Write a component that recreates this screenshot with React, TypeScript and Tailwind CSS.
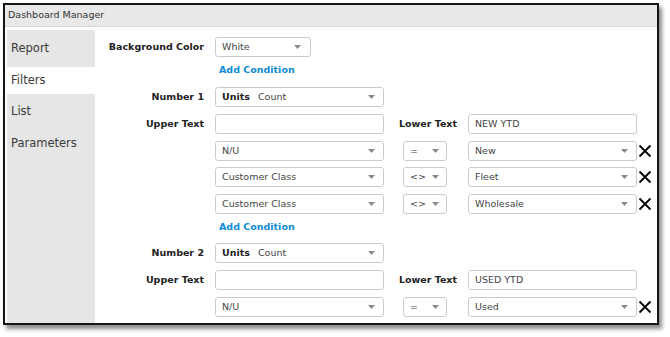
import type { ReactNode } from "react";

const FONT = "font-['DejaVu_Sans',Verdana,sans-serif]";

function Arrow() {
  return (
    <svg width="7" height="4" viewBox="0 0 7 4" className="shrink-0">
      <path d="M0 0h7L3.5 4z" fill="#8a8a8a" />
    </svg>
  );
}

function Select({ w, children, arrowPad = "pr-[8px]" }: { w: string; children: ReactNode; arrowPad?: string }) {
  return (
    <div className={`${w} flex h-[20px] shrink-0 items-center justify-between rounded-[3px] border border-[#cbcbcb] bg-white pl-[6px] ${arrowPad} text-[9.5px] text-[#444]`}>
      <span className="flex items-center gap-[8px]">{children}</span>
      <Arrow />
    </div>
  );
}

function Input({ value = "" }: { value?: string }) {
  return (
    <div className="flex h-[20px] w-[169px] shrink-0 items-center rounded-[3px] border border-[#cbcbcb] bg-white pl-[6px] text-[9.5px] text-[#444]">
      {value}
    </div>
  );
}

function Label({ children }: { children?: ReactNode }) {
  return <div className="w-[120px] shrink-0 pr-[11px] text-right text-[9.5px] font-bold text-[#222]">{children}</div>;
}

function Cross() {
  return (
    <svg width="14" height="14" viewBox="0 0 14 14" className="ml-[1px] shrink-0">
      <path d="M1.5 1.5l11 11M12.5 1.5l-11 11" stroke="#000" strokeWidth="1.8" />
    </svg>
  );
}

function Condition({ field, op, value }: { field: string; op: string; value: string }) {
  return (
    <div className="flex h-[20px] items-center">
      <Label />
      <Select w="w-[169px]">{field}</Select>
      <div className="ml-[19px]">
        <Select w="w-[44px]" arrowPad="pr-[7px]">{op}</Select>
      </div>
      <div className="ml-[21px]">
        <Select w="w-[169px]">{value}</Select>
      </div>
      <Cross />
    </div>
  );
}

function AddCondition({ className }: { className: string }) {
  return (
    <div className={`flex h-[20px] items-center ${className}`}>
      <div className="w-[120px] shrink-0" />
      <span className="pl-[4px] text-[9.5px] font-bold text-[#0c8bd6]">Add Condition</span>
    </div>
  );
}

function NumberBlock({ n, lower, first, className }: { n: number; lower: string; first: [string, string, string]; className: string }) {
  return (
    <>
      <div className={`flex h-[20px] items-center ${className}`}>
        <Label>Number {n}</Label>
        <Select w="w-[169px]">
          <b className="text-[#222]">Units</b>
          <span>Count</span>
        </Select>
      </div>
      <div className="mt-[7px] flex h-[20px] items-center">
        <Label>Upper Text</Label>
        <Input />
        <div className="w-[73px] shrink-0 text-right text-[9.5px] font-bold text-[#222]">Lower Text</div>
        <div className="ml-[11px]">
          <Input value={lower} />
        </div>
      </div>
      <div className="mt-[7px]">
        <Condition field={first[0]} op={first[1]} value={first[2]} />
      </div>
    </>
  );
}

export default function App() {
  const tabs = [
    { name: "Report", h: "h-[37px]" },
    { name: "Filters", h: "h-[27px]", active: true },
    { name: "List", h: "h-[35px]" },
    { name: "Parameters", h: "h-[30px]" },
  ];
  return (
    <div className={`h-[337px] w-[670px] bg-white pl-[3px] pt-[3px] ${FONT}`}>
      <div className="flex h-[322px] w-[656px] flex-col overflow-hidden border-2 border-[#151515] bg-white shadow-[3px_4px_4px_rgba(0,0,0,0.45)]">
        <div className="flex h-[22px] shrink-0 items-center border-b border-[#d6d6d6] bg-[#e8e8e8] pl-[3px] text-[9.5px] text-[#333]">
          Dashboard Manager
        </div>
        <div className="flex flex-1">
          <div className="flex w-[90px] shrink-0 flex-col pl-[2px] pt-[3px]">
            <div className="flex flex-1 flex-col bg-[#e6e6e6]">
              {tabs.map((t) => (
                <div key={t.name} className={`flex ${t.h} items-center pl-[4px] text-[11.5px] text-[#3a3a3a] ${t.active ? "bg-white" : ""}`}>
                  {t.name}
                </div>
              ))}
            </div>
          </div>
          <div className="flex flex-1 flex-col pt-[10px]">
            <div className="flex h-[20px] items-center">
              <Label>Background Color</Label>
              <Select w="w-[96px]" arrowPad="pr-[9px]">White</Select>
            </div>
            <AddCondition className="mt-[3px]" />
            <NumberBlock n={1} lower="NEW YTD" first={["N/U", "=", "New"]} className="mt-[7px]" />
            <div className="mt-[6px]">
              <Condition field="Customer Class" op="<>" value="Fleet" />
            </div>
            <div className="mt-[7px]">
              <Condition field="Customer Class" op="<>" value="Wholesale" />
            </div>
            <AddCondition className="mt-[3px]" />
            <NumberBlock n={2} lower="USED YTD" first={["N/U", "=", "Used"]} className="mt-[6px]" />
          </div>
        </div>
      </div>
    </div>
  );
}
